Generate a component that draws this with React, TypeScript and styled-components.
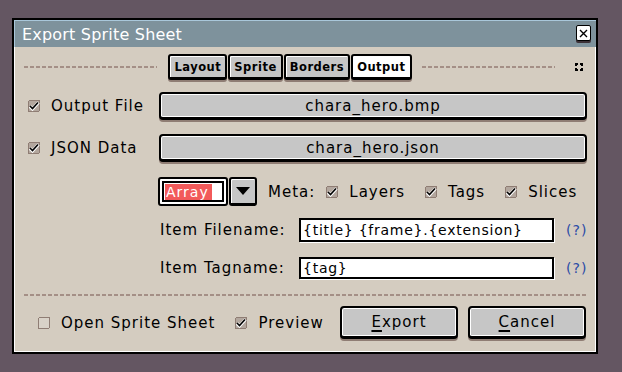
import styled, { createGlobalStyle } from "styled-components";

const GlobalStyle = createGlobalStyle`
  html, body {
    margin: 0;
    padding: 0;
    background: #645662;
  }
  body {
    font-family: "DejaVu Sans", "Liberation Sans", sans-serif;
    font-size: 15px;
    color: #000;
  }
`;

const Desktop = styled.div`
  width: 622px;
  height: 372px;
  padding: 18px 0 0 12px;
  box-sizing: border-box;
`;

const Window = styled.div`
  width: 586px;
  height: 336px;
  box-sizing: border-box;
  border: 2px solid #000;
  background: #d4ccc0;
  box-shadow: inset 1px 0 0 #fff, inset -1px -1px 0 #fff;
  display: flex;
  flex-direction: column;
`;

const TitleBar = styled.div`
  height: 26px;
  background: #7e929c;
  border-top: 1px solid #a9c7da;
  box-shadow: inset 1px 0 0 #a9c7da;
  display: flex;
  align-items: center;
  justify-content: space-between;
  padding: 0 5px 0 8px;
  color: #fff;
  font-size: 16px;
  letter-spacing: 0.2px;
`;

const CloseButton = styled.div`
  width: 15px;
  height: 16px;
  box-sizing: border-box;
  border: 1px solid #000;
  border-radius: 2px;
  background: #fff;
  box-shadow: 0 2px 0 #3b3036;
  display: flex;
  align-items: center;
  justify-content: center;
  margin-top: -2px;
`;

const Body = styled.div`
  flex: 1;
  display: flex;
  flex-direction: column;
  padding: 6px 9px 0 10px;
`;

const TabRow = styled.div`
  display: flex;
  align-items: center;
  height: 28px;
`;

const Dashed = styled.div`
  flex: 1;
  height: 2px;
  background: repeating-linear-gradient(
    90deg,
    #a48f86 0 4px,
    transparent 4px 6px
  );
`;

const Tabs = styled.div`
  display: flex;
  margin: 0 9px 0 11px;
`;

const Tab = styled.div<{ $active?: boolean }>`
  height: 26px;
  box-sizing: border-box;
  border: 2px solid #000;
  border-bottom-width: 3px;
  border-radius: 3px;
  padding: 0 4px;
  margin-right: 1px;
  background: ${(p) => (p.$active ? "#fff" : "#c6c6c6")};
  box-shadow: inset 1px 1px 0 #fff, 0 2px 0 #8f7d74;
  display: flex;
  align-items: center;
  font-size: 11.5px;
  font-weight: bold;
  letter-spacing: 0.5px;
`;

const Expand = styled.div`
  width: 28px;
  display: flex;
  justify-content: flex-end;
  padding-right: 4px;
`;

const FieldRow = styled.div<{ $top: number }>`
  display: grid;
  grid-template-columns: 135px 1fr;
  align-items: center;
  margin-top: ${(p) => p.$top}px;
`;

const CheckLabel = styled.label<{ $indent?: number }>`
  display: flex;
  align-items: center;
  gap: 11px;
  margin-left: ${(p) => p.$indent ?? 4}px;
  letter-spacing: 1px;
  white-space: nowrap;
`;

const FileButton = styled.div`
  height: 28px;
  box-sizing: border-box;
  border: 2px solid #000;
  border-bottom-width: 3px;
  border-radius: 4px;
  background: #c6c6c6;
  box-shadow: inset 0 0 0 1px #fff, 0 2px 0 #8f7d74;
  display: flex;
  align-items: center;
  justify-content: center;
  letter-spacing: 1px;
`;

const MetaRow = styled.div`
  display: flex;
  align-items: center;
  margin: 15px 0 0 134px;
  gap: 11px;
`;

const Combo = styled.div`
  display: flex;
  align-items: stretch;
  height: 29px;
`;

const ComboField = styled.div`
  width: 70px;
  box-sizing: border-box;
  border: 2px solid #000;
  border-radius: 3px;
  background: #fff;
  padding: 2px;
  display: flex;
`;

const ComboInner = styled.div`
  flex: 1;
  border: 2px solid #000;
  display: flex;
  align-items: center;
  padding-left: 1px;
`;

const Selected = styled.span`
  background: #f25a5a;
  color: #fff;
  font-size: 14px;
  line-height: 16px;
  padding: 0 3px 0 1px;
  letter-spacing: 1px;
`;

const ArrowButton = styled.div`
  width: 28px;
  box-sizing: border-box;
  border: 2px solid #000;
  border-bottom-width: 3px;
  border-radius: 3px;
  margin-left: 1px;
  background: #c6c6c6;
  box-shadow: inset 1px 1px 0 #fff;
  display: flex;
  align-items: center;
  justify-content: center;
`;

const MetaLabel = styled.span`
  letter-spacing: 1px;
`;

const MetaChecks = styled.div`
  display: flex;
  gap: 20px;
`;

const ItemRow = styled.div<{ $top: number }>`
  display: grid;
  grid-template-columns: 139px 255px 1fr;
  align-items: center;
  margin: ${(p) => p.$top}px 0 0 136px;
`;

const ItemLabel = styled.span`
  letter-spacing: 1px;
`;

const Entry = styled.div<{ $h: number }>`
  height: ${(p) => p.$h}px;
  box-sizing: border-box;
  border: 2px solid #000;
  background: #fff;
  box-shadow: 1px 1px 0 #fff;
  display: flex;
  align-items: center;
  padding-left: 2px;
  font-size: 14px;
  letter-spacing: 0.75px;
`;

const Help = styled.span`
  color: #2a4aa6;
  font-size: 14px;
  margin-left: 12px;
  letter-spacing: 1px;
`;

const Separator = styled(Dashed)`
  flex: none;
  margin-top: 15px;
`;

const Footer = styled.div`
  display: flex;
  align-items: center;
  margin: 10px 1px 0 0;
`;

const FooterChecks = styled.div`
  display: flex;
  align-items: center;
  gap: 20px;
  flex: 1;
`;

const DialogButton = styled.div`
  width: 118px;
  height: 33px;
  box-sizing: border-box;
  border: 2px solid #000;
  border-bottom-width: 3px;
  border-radius: 4px;
  background: #c6c6c6;
  box-shadow: inset 0 0 0 1px #fff, 0 2px 0 #8f7d74;
  display: flex;
  align-items: center;
  justify-content: center;
  margin-left: 10px;
  letter-spacing: 1px;
  u {
    text-decoration-thickness: 2px;
    text-underline-offset: 3px;
  }
`;

const CheckBox = ({ checked = true }: { checked?: boolean }) => (
  <svg width="12" height="12" viewBox="0 0 12 12" shapeRendering="crispEdges">
    <rect x="0.5" y="0.5" width="11" height="11" rx="1.5" fill={checked ? "#b3a79e" : "#d9d2c8"} stroke="#8f7d74" />
    {checked && (
      <>
        <path d="M2 6.5 L4.5 9 L10.5 2.5" fill="none" stroke="#fff" strokeWidth="3.2" shapeRendering="auto" />
        <path d="M2 6 L4.5 8.5 L10 2.5" fill="none" stroke="#000" strokeWidth="1.6" shapeRendering="auto" />
      </>
    )}
  </svg>
);

export default function App() {
  return (
    <>
      <GlobalStyle />
      <Desktop>
        <Window>
          <TitleBar>
            <span>Export Sprite Sheet</span>
            <CloseButton>
              <svg width="9" height="9" viewBox="0 0 9 9">
                <path d="M1 1 L8 8 M8 1 L1 8" stroke="#000" strokeWidth="1.4" />
              </svg>
            </CloseButton>
          </TitleBar>
          <Body>
            <TabRow>
              <Dashed />
              <Tabs>
                <Tab>Layout</Tab>
                <Tab>Sprite</Tab>
                <Tab>Borders</Tab>
                <Tab $active>Output</Tab>
              </Tabs>
              <Dashed />
              <Expand>
                <svg width="8" height="8" viewBox="0 0 8 8" shapeRendering="crispEdges">
                  <path d="M0 0h3v2h-1v1h-2z M5 0h3v3h-2v-1h-1z M0 5h2v1h1v2h-3z M6 5h2v3h-3v-2h1z" fill="#000" />
                </svg>
              </Expand>
            </TabRow>

            <FieldRow $top={11}>
              <CheckLabel>
                <CheckBox />
                Output File
              </CheckLabel>
              <FileButton>chara_hero.bmp</FileButton>
            </FieldRow>
            <FieldRow $top={14}>
              <CheckLabel>
                <CheckBox />
                JSON Data
              </CheckLabel>
              <FileButton>chara_hero.json</FileButton>
            </FieldRow>

            <MetaRow>
              <Combo>
                <ComboField>
                  <ComboInner>
                    <Selected>Array</Selected>
                  </ComboInner>
                </ComboField>
                <ArrowButton>
                  <svg width="14" height="8" viewBox="0 0 14 8">
                    <path d="M0 0 H14 L7 8 Z" fill="#000" />
                  </svg>
                </ArrowButton>
              </Combo>
              <MetaLabel>Meta:</MetaLabel>
              <MetaChecks>
                <CheckLabel $indent={0}>
                  <CheckBox />
                  Layers
                </CheckLabel>
                <CheckLabel $indent={0}>
                  <CheckBox />
                  Tags
                </CheckLabel>
                <CheckLabel $indent={0}>
                  <CheckBox />
                  Slices
                </CheckLabel>
              </MetaChecks>
            </MetaRow>

            <ItemRow $top={12}>
              <ItemLabel>Item Filename:</ItemLabel>
              <Entry $h={24}>{"{title} {frame}.{extension}"}</Entry>
              <Help>(?)</Help>
            </ItemRow>
            <ItemRow $top={15}>
              <ItemLabel>Item Tagname:</ItemLabel>
              <Entry $h={22}>{"{tag}"}</Entry>
              <Help>(?)</Help>
            </ItemRow>

            <Separator />

            <Footer>
              <FooterChecks>
                <CheckLabel $indent={14}>
                  <CheckBox checked={false} />
                  Open Sprite Sheet
                </CheckLabel>
                <CheckLabel $indent={0}>
                  <CheckBox />
                  Preview
                </CheckLabel>
              </FooterChecks>
              <DialogButton>
                <span>
                  <u>E</u>xport
                </span>
              </DialogButton>
              <DialogButton>
                <span>
                  <u>C</u>ancel
                </span>
              </DialogButton>
            </Footer>
          </Body>
        </Window>
      </Desktop>
    </>
  );
}
